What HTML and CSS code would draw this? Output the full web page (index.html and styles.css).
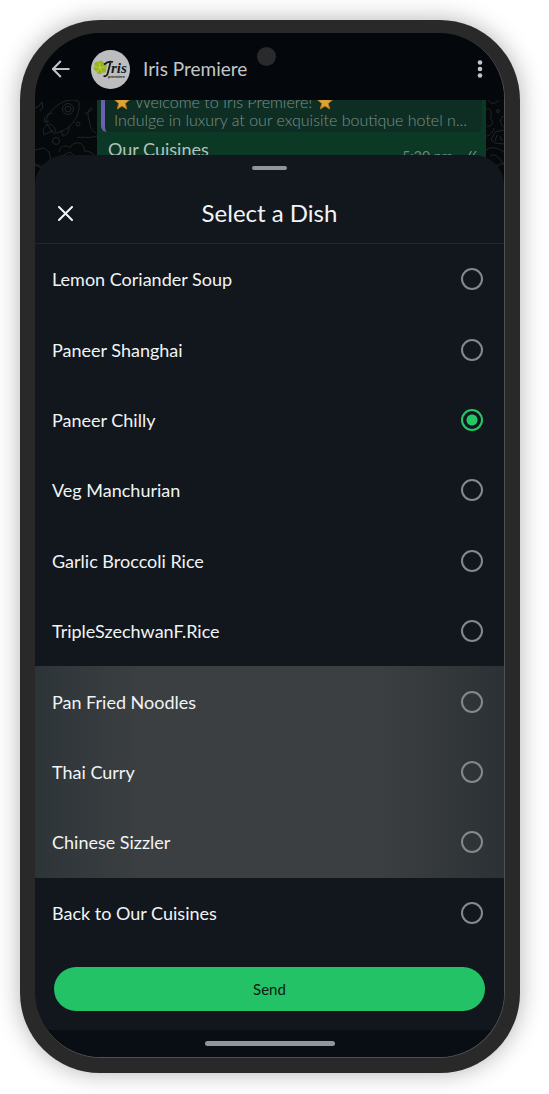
FILE: index.html
```html
<!DOCTYPE html>
<html lang="en">
<head>
<meta charset="utf-8">
<meta name="viewport" content="width=device-width, initial-scale=1">
<title>Select a Dish</title>
<link rel="stylesheet" href="styles.css">
</head>
<body>
<main class="phone">
  <span class="camera"></span>
  <div class="screen">
    <header class="topbar">
      <button class="icon-btn" type="button" aria-label="Back">
        <svg width="18" height="18" viewBox="0 0 18 18"><path d="M17.5 9H1.200M8.800 1L1 9l7.800 8" fill="none" stroke="currentColor" stroke-width="2"/></svg>
      </button>
      <svg class="avatar" width="39" height="39" viewBox="0 0 39 39" aria-hidden="true">
        <circle cx="19.500" cy="19.500" r="19.500" fill="#bdbdbf"/>
        <g fill="#98b51c">
          <circle cx="10" cy="13.500" r="2.700"/><circle cx="6" cy="14.500" r="2.700"/><circle cx="5.500" cy="18.500" r="2.700"/>
          <circle cx="8.500" cy="21.500" r="2.700"/><circle cx="12.500" cy="20" r="2.700"/><circle cx="13" cy="16" r="2.700"/><circle cx="9" cy="17.500" r="3.800"/>
        </g>
        <path d="M9 17.500l-.8-4.500M9 17.500l-5-1M9 17.500l-2.500 4M9 17.500l2 4M9 17.500l5-.5" stroke="#c3cd6c" stroke-width=".8"/>
        <path d="M13 14.500q4.500-4 9-2.500M19.500 12.500L16.500 24q-1 3-4 2" fill="none" stroke="#17181a" stroke-width="1.800"/>
        <text class="logo-name" x="20" y="23">ris</text>
        <text class="logo-sub" x="17" y="28">premiere</text>
      </svg>
      <h1 class="contact">Iris Premiere</h1>
      <button class="icon-btn menu" type="button" aria-label="More options">
        <svg width="6" height="20" viewBox="0 0 6 20" fill="currentColor"><circle cx="3" cy="3.500" r="2.300"/><circle cx="3" cy="10" r="2.300"/><circle cx="3" cy="16.500" r="2.300"/></svg>
      </button>
    </header>

    <section class="chat">
      <svg class="doodle" width="62" height="84" viewBox="0 0 62 84" aria-hidden="true">
        <path d="M0 8l4-2 3-4 1 5-3 4M13 25c-4-4 0-13 10-20 8-6 18-6 21-3 1 9-2 17-9 24-7 6-16 9-18 6zM13 25c-3 0-6 4-4 10 4-3 8-3 9-5M20 32c1-4-2-7-6-8M17 13c-6 1-8 5-8 9l5-1M34 27c0 5-2 8-6 9l-2-6M57 7c-4 3-5 7-3 13 2 5 0 9 7 13M50 14l8-5M0 50l9-2 5 4 2 8-8 7-8-3M24 52c0-6 8-8 11-4 4-9 16-5 14 3 8 0 12 5 13 8M35 52l6 5-7 4-7-5zM41 57v8l-7 4v-8M0 65l6 3 5 8M42 38c4-2 12 1 20-2"/>
        <circle cx="33" cy="9" r="5.500"/><circle cx="33" cy="9" r="3"/><circle cx="43" cy="24" r="2"/><circle cx="21" cy="41" r="3.500"/>
      </svg>
      <article class="bubble">
        <div class="quote">
          <p class="line welcome">
            <svg width="16" height="16" viewBox="0 0 16 16" aria-hidden="true"><path class="star" d="M8 .5l2 5 5.500.4-4.200 3.500 1.400 5.600L8 12l-4.700 3 1.400-5.600L.5 5.900 6 5.500z"/></svg>
            <span>Welcome to Iris Premiere!</span>
            <svg width="16" height="16" viewBox="0 0 16 16" aria-hidden="true"><path class="star" d="M8 .5l2 5 5.500.4-4.200 3.500 1.400 5.600L8 12l-4.700 3 1.400-5.600L.5 5.900 6 5.500z"/></svg>
          </p>
          <p class="line">Indulge in luxury at our exquisite boutique hotel n...</p>
        </div>
        <div class="message">
          <p class="message-text">Our Cuisines</p>
          <p class="stamp">5:20 pm
            <svg class="ticks" width="14" height="10" viewBox="0 0 14 10" aria-hidden="true"><path d="M0 5l3 4L8.500 0M6 8l1 1 6-9" fill="none" stroke="currentColor" stroke-width="1.300"/></svg>
          </p>
        </div>
      </article>
      <svg class="doodle" width="18" height="84" viewBox="0 0 18 84" aria-hidden="true">
        <path d="M2 0c3 5 8 4 12-1M0 10c4-4 7 3 4 8 5 4 2 9-3 8M18 16c-5 2-4 9 0 11M0 36c5 0 7-5 8-8M18 30l-9 2-4 8 4 3 9 1M11 35l-2 6M14 36l2 5M0 50c6-4 12-2 18 2M4 56c5-3 9 1 14 9M10 66l8-3"/>
        <circle cx="12" cy="11" r="1.500"/>
      </svg>
    </section>

    <form class="sheet">
      <div class="sheet-head">
        <span class="handle"></span>
        <div class="title-row">
          <button class="icon-btn" type="button" aria-label="Close">
            <svg width="15" height="15" viewBox="0 0 15 15"><path d="M1 1l13 13M14 1L1 14" stroke="currentColor" stroke-width="2" stroke-linecap="round"/></svg>
          </button>
          <h2 class="title">Select a Dish</h2>
        </div>
      </div>
      <div class="list">
        <label class="row"><span>Lemon Coriander Soup</span><input class="radio" type="radio" name="dish"></label>
        <label class="row"><span>Paneer Shanghai</span><input class="radio" type="radio" name="dish"></label>
        <label class="row"><span>Paneer Chilly</span><input class="radio" type="radio" name="dish" checked></label>
        <label class="row"><span>Veg Manchurian</span><input class="radio" type="radio" name="dish"></label>
        <label class="row"><span>Garlic Broccoli Rice</span><input class="radio" type="radio" name="dish"></label>
        <label class="row"><span>TripleSzechwanF.Rice</span><input class="radio" type="radio" name="dish"></label>
        <div class="pressed">
          <label class="row"><span>Pan Fried Noodles</span><input class="radio" type="radio" name="dish"></label>
          <label class="row"><span>Thai Curry</span><input class="radio" type="radio" name="dish"></label>
          <label class="row"><span>Chinese Sizzler</span><input class="radio" type="radio" name="dish"></label>
        </div>
        <label class="row"><span>Back to Our Cuisines</span><input class="radio" type="radio" name="dish"></label>
      </div>
      <div class="actions"><button class="send" type="button">Send</button></div>
    </form>
    <div class="navbar"><span class="home"></span></div>
  </div>
</main>
</body>
</html>
```
FILE: styles.css
```css
* {
  box-sizing: border-box;
}

body {
  margin: 0;
  min-height: 100vh;
  display: flex;
  padding: 20px 29px 21px 20px;
  background: #fff;
  font-family: Lato, "Noto Sans", sans-serif;
  color: #f1f4f5;
}

h1, h2, p {
  margin: 0;
  font-weight: 400;
}

.phone {
  position: relative;
  flex: 1;
  display: flex;
  min-width: 0;
  padding: 13px 15px 15px;
  border-radius: 80px;
  background: #292929;
  box-shadow: 0 0 24px rgba(0, 0, 0, 0.3);
}

.camera {
  position: absolute;
  z-index: 2;
  top: 27px;
  left: calc(50% - 13px);
  width: 19px;
  height: 19px;
  border-radius: 50%;
  background: #292a2c;
}

.screen {
  flex: 1;
  min-width: 0;
  display: flex;
  flex-direction: column;
  overflow: hidden;
  border: solid #4f5152;
  border-width: 0 1px 1px 0;
  border-radius: 66px;
  background: #11171d;
}

.icon-btn {
  display: flex;
  padding: 0;
  border: 0;
  background: none;
  color: inherit;
}

.topbar {
  display: flex;
  align-items: center;
  height: 67px;
  padding: 5px 21px 0 17px;
  background: #04080c;
  color: #c3c6c8;
}

.avatar {
  margin: 0 13px 0 21px;
}

.logo-name {
  font: italic bold 15px "Liberation Serif", serif;
  fill: #17181a;
}

.logo-sub {
  font: bold 4px "Liberation Sans", sans-serif;
  fill: #17181a;
}

.contact {
  font-size: 19px;
  line-height: 24px;
}

.menu {
  margin-left: auto;
}

.chat {
  display: flex;
  height: 84px;
  overflow: hidden;
  background: #06090b;
}

.doodle {
  flex: none;
  fill: none;
  stroke: #222628;
  stroke-width: 1;
}

.bubble {
  flex: 1;
  min-width: 0;
  padding: 0 4px;
  background: #0c3826;
}

.quote {
  margin-top: -7px;
  padding: 0 9px 3px;
  border-left: 4px solid #6c60ae;
  border-radius: 6px;
  background: #0e2e24;
  color: #7b9188;
}

.line {
  overflow: hidden;
  font-size: 16px;
  font-weight: 300;
  line-height: 18px;
  white-space: nowrap;
}

.welcome {
  display: flex;
  align-items: center;
  gap: 5px;
}

.star {
  fill: #d9a536;
  stroke: #b3741f;
  stroke-width: 1;
}

.message {
  display: flex;
  justify-content: space-between;
  padding: 6px 5px 6px 7px;
}

.message-text {
  font-size: 18px;
  line-height: 22px;
  color: #b5c1bb;
}

.stamp {
  display: flex;
  align-items: center;
  gap: 10px;
  padding-top: 10px;
  font-size: 14px;
  line-height: 16px;
  color: #71877e;
}

.sheet {
  position: relative;
  flex: 1;
  display: flex;
  flex-direction: column;
  margin-top: -29px;
  border-radius: 30px 30px 0 0;
  background: #11171d;
}

.sheet-head {
  display: flex;
  flex-direction: column;
  align-items: center;
  height: 89px;
  padding-top: 11px;
  border-bottom: 1px solid #20282a;
}

.handle {
  width: 35px;
  height: 4px;
  border-radius: 2px;
  background: #90969b;
}

.title-row {
  display: grid;
  grid-template-columns: 40px 1fr 40px;
  align-items: center;
  align-self: stretch;
  padding: 28px 23px 0;
}

.title {
  font-size: 24px;
  line-height: 30px;
  text-align: center;
}

.list {
  flex: 10;
  display: flex;
  flex-direction: column;
}

.row {
  flex: 1;
  display: flex;
  align-items: center;
  justify-content: space-between;
  min-height: 48px;
  padding: 0 21px 0 17px;
  font-size: 18px;
  line-height: 24px;
}

.pressed {
  flex: 3;
  display: flex;
  flex-direction: column;
  background: linear-gradient(90deg, #2d3438, #3b3f41 22%, #3b3f41 74%, #2c3135);
}

.radio {
  appearance: none;
  width: 22px;
  height: 22px;
  margin: 0;
  border: 2px solid #85898c;
  border-radius: 50%;
}

.radio:checked {
  border-color: #25c768;
  background: radial-gradient(circle, #25c768 5px, transparent 6px);
}

.actions {
  padding: 19px;
}

.send {
  display: block;
  width: 100%;
  height: 44px;
  border: 0;
  border-radius: 22px;
  background: #23c267;
  color: #0b1a12;
  font: 15px Lato, "Noto Sans", sans-serif;
}

.navbar {
  display: flex;
  justify-content: center;
  height: 27px;
  padding-top: 11px;
  background: #080e13;
}

.home {
  width: 130px;
  height: 5px;
  border-radius: 3px;
  background: #90969b;
}
```
